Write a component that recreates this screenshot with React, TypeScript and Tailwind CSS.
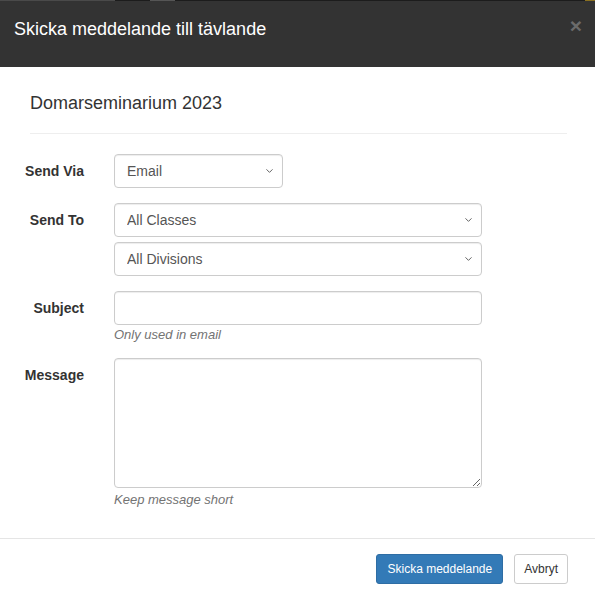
import { ChevronDown } from "lucide-react"

const font = { fontFamily: '"Liberation Sans", Arial, sans-serif' }

function Select({ value, width }: { value: string; width: string }) {
    return (
        <div className={`relative ${width}`}>
            <select
                defaultValue={value}
                className="w-full h-[34px] appearance-none rounded-[4px] border border-[#ccc] bg-white pl-[12px] pr-[30px] text-[14px] text-[#555] shadow-[inset_0_1px_1px_rgba(0,0,0,0.075)] outline-none"
            >
                <option>{value}</option>
            </select>
            <ChevronDown
                className="pointer-events-none absolute right-[8px] top-1/2 -translate-y-1/2 w-[11px] h-[11px] text-[#555]"
                strokeWidth={2}
            />
        </div>
    )
}

function Row({ label, children }: { label: string; children: React.ReactNode }) {
    return (
        <div className="flex gap-[15px]">
            <label className="w-[99px] shrink-0 pr-[15px] pt-[7px] text-right text-[14px] font-bold leading-[20px] text-[#333]">
                {label}
            </label>
            <div className="w-[368px]">{children}</div>
        </div>
    )
}

export default function App() {
    return (
        <div className="w-[595px] h-[594px] overflow-hidden bg-white" style={font}>
            <div className="h-[1px] bg-[#1c1c1c] flex">
                <div className="w-[115px] bg-[#4a4a4a]" />
                <div className="w-[35px]" />
                <div className="w-[25px] bg-[#555]" />
                <div className="flex-1" />
                <div className="w-[10px] bg-[#8a7020]" />
            </div>
            <div className="h-[66px] bg-[#333] flex items-start justify-between pl-[14px] pr-[13px] pt-[15px]">
                <h4 className="text-[18px] leading-[26px] text-white">Skicka meddelande till tävlande</h4>
                <button className="text-[21px] font-bold leading-[18px] text-[#6b6b6b] mt-[1px]">×</button>
            </div>

            <div className="pt-[26px]">
                <div className="pl-[30px] pr-[28px]">
                    <h4 className="text-[18px] leading-[20px] text-[#333]">Domarseminarium 2023</h4>
                    <hr className="mt-[20px] border-0 border-t border-[#eee]" />
                </div>

                <div className="mt-[20px] flex flex-col">
                    <div className="mb-[15px]">
                        <Row label="Send Via">
                            <Select value="Email" width="w-[169px]" />
                        </Row>
                    </div>
                    <div className="mb-[15px]">
                        <Row label="Send To">
                            <div className="flex flex-col gap-[5px]">
                                <Select value="All Classes" width="w-full" />
                                <Select value="All Divisions" width="w-full" />
                            </div>
                        </Row>
                    </div>
                    <div className="mb-[14px]">
                        <Row label="Subject">
                            <input
                                type="text"
                                className="block w-full h-[34px] rounded-[4px] border border-[#ccc] px-[12px] text-[14px] text-[#555] shadow-[inset_0_1px_1px_rgba(0,0,0,0.075)] outline-none"
                            />
                            <p className="mt-[1px] text-[13px] italic leading-[18px] text-[#737373]">Only used in email</p>
                        </Row>
                    </div>
                    <Row label="Message">
                        <textarea className="block w-full h-[130px] rounded-[4px] border border-[#ccc] px-[12px] py-[6px] text-[14px] text-[#555] shadow-[inset_0_1px_1px_rgba(0,0,0,0.075)] outline-none" />
                        <p className="mt-[3px] text-[13px] italic leading-[18px] text-[#737373]">Keep message short</p>
                    </Row>
                </div>
            </div>

            <div className="mt-[29px] border-t border-[#e5e5e5] flex justify-end gap-[11px] pt-[15px] pr-[27px]">
                <button className="h-[30px] rounded-[3px] border border-[#2e6da4] bg-[#337ab7] px-[10px] text-[12px] text-white">
                    Skicka meddelande
                </button>
                <button className="h-[30px] rounded-[3px] border border-[#ccc] bg-white px-[9px] text-[12px] text-[#333]">
                    Avbryt
                </button>
            </div>
        </div>
    )
}
